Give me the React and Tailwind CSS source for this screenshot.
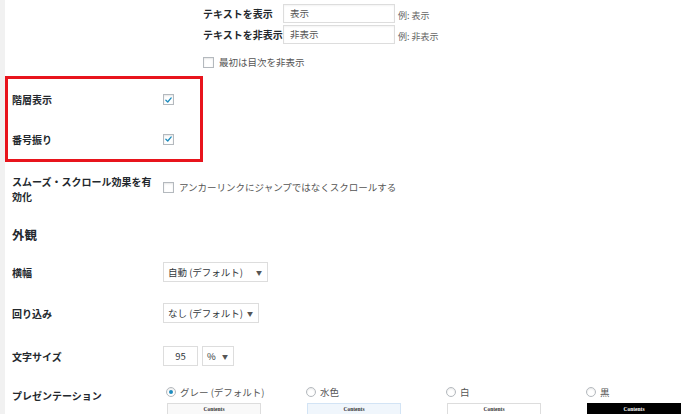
import React from "react";

const font = { fontFamily: '"Noto Sans CJK JP", "Noto Sans", sans-serif' };

function Check({ checked }) {
  return (
    <span className="relative inline-flex h-[11px] w-[11px] shrink-0 items-center justify-center border border-[#b4b9be] bg-white shadow-[inset_0_1px_2px_rgba(0,0,0,0.1)]">
      {checked && (
        <svg viewBox="0 0 12 12" className="h-[10px] w-[10px]">
          <path d="M2.5 6.3 L5 8.6 L9.6 3.2" fill="none" stroke="#1e8cbe" strokeWidth="1.8" strokeLinecap="round" strokeLinejoin="round" />
        </svg>
      )}
    </span>
  );
}

function Radio({ checked }) {
  return (
    <span className="inline-flex h-[10px] w-[10px] shrink-0 items-center justify-center rounded-full border border-[#b4b9be] bg-white shadow-[inset_0_1px_2px_rgba(0,0,0,0.1)]">
      {checked && <span className="h-[4px] w-[4px] rounded-full bg-[#1e8cbe]" />}
    </span>
  );
}

function Select({ text, w }) {
  return (
    <div className={`flex h-[20px] items-center justify-between whitespace-nowrap border border-[#ddd] bg-white pl-[4px] pr-[5px] text-[9.5px] text-[#32373c] ${w}`}>
      <span>{text}</span>
      <span className="text-[6px] text-[#555]">▼</span>
    </div>
  );
}

const Label = ({ children, w = "w-[151px]", className = "" }) => (
  <div className={`shrink-0 text-[10px] font-semibold leading-[15px] text-[#23282d] ${w} ${className}`}>{children}</div>
);

export default function App() {
  const presets = [
    { label: "グレー (デフォルト)", checked: true, box: "bg-[#f9f9f9] border border-[#ddd] text-[#333]" },
    { label: "水色", box: "bg-[#f0f6fc] border border-[#d3e4f5] text-[#333]" },
    { label: "白", box: "bg-white border border-[#ddd] text-[#333]" },
    { label: "黒", box: "bg-black border border-black text-white" },
  ];
  return (
    <div className="flex h-[414px] w-[700px] overflow-hidden bg-white" style={font}>
      <div className="w-[5px] shrink-0 bg-[#f1f1f1]" />
      <div className="flex flex-1 flex-col">
        {/* nested top section */}
        <div className="flex flex-col pl-[198px]">
          <div className="mt-[4px] flex h-[19px] items-center">
            <div className="w-[80px] text-[10px] font-semibold text-[#23282d]">テキストを表示</div>
            <div className="flex h-[19px] w-[112px] items-center border border-[#ddd] bg-white pl-[6px] text-[9.5px] text-[#555] shadow-[inset_0_1px_2px_rgba(0,0,0,0.05)]">表示</div>
            <div className="ml-[3px] mt-[4px] text-[9px] text-[#666]">例: 表示</div>
          </div>
          <div className="mt-[2px] flex h-[19px] items-center">
            <div className="w-[80px] whitespace-nowrap text-[10px] font-semibold text-[#23282d]">テキストを非表示</div>
            <div className="flex h-[19px] w-[112px] items-center border border-[#ddd] bg-white pl-[6px] text-[9.5px] text-[#555] shadow-[inset_0_1px_2px_rgba(0,0,0,0.05)]">非表示</div>
            <div className="ml-[3px] mt-[4px] text-[9px] text-[#666]">例: 非表示</div>
          </div>
          <div className="mt-[11px] flex h-[15px] items-center gap-[5px]">
            <Check />
            <span className="text-[9.5px] text-[#555]">最初は目次を非表示</span>
          </div>
        </div>

        {/* red box */}
        <div className="mt-[6px] flex h-[86px] w-[198px] flex-col border-[3px] border-[#e8141c] pt-[1px]">
          <div className="flex h-[40px] items-center pl-[4px]">
            <Label>階層表示</Label>
            <Check checked />
          </div>
          <div className="flex h-[40px] items-center pl-[4px]">
            <Label>番号振り</Label>
            <Check checked />
          </div>
        </div>

        <div className="mt-[12px] flex pl-[7px]">
          <Label w="w-[145px]">スムーズ・スクロール効果を有効化</Label>
          <div className="ml-[6px] mt-[6px] flex h-[15px] items-center gap-[5px]">
            <Check />
            <span className="text-[9.5px] text-[#555]">アンカーリンクにジャンプではなくスクロールする</span>
          </div>
        </div>

        <div className="mt-[22px] pl-[7px] text-[12.5px] font-semibold leading-[18px] text-[#23282d]">外観</div>

        <div className="mt-[18px] flex h-[20px] items-center pl-[7px]">
          <Label>横幅</Label>
          <Select text="自動 (デフォルト)" w="w-[105px]" />
        </div>
        <div className="mt-[21px] flex h-[20px] items-center pl-[7px]">
          <Label>回り込み</Label>
          <Select text="なし (デフォルト)" w="w-[96px]" />
        </div>
        <div className="mt-[23px] flex h-[20px] items-center pl-[7px]">
          <Label>文字サイズ</Label>
          <div className="flex h-[20px] w-[35px] items-center justify-center border border-[#ddd] bg-white text-[9.5px] text-[#32373c]">95</div>
          <div className="ml-[4px]">
            <Select text="%" w="w-[32px]" />
          </div>
        </div>

        <div className="mt-[20px] flex pl-[7px]">
          <Label className="mt-[2px]">プレゼンテーション</Label>
          <div className="flex">
            {presets.map((p) => (
              <div key={p.label} className="flex w-[140px] flex-col">
                <div className="flex h-[12px] items-center gap-[4px] pl-[3px]">
                  <Radio checked={p.checked} />
                  <span className="text-[9.5px] text-[#555]">{p.label}</span>
                </div>
                <div
                  className={`ml-[4px] mt-[5px] flex h-[24px] w-[94px] justify-center pt-[1px] text-[5.5px] font-bold ${p.box}`}
                  style={{ fontFamily: '"Liberation Serif", serif' }}
                >
                  Contents
                </div>
              </div>
            ))}
          </div>
        </div>
      </div>
    </div>
  );
}
